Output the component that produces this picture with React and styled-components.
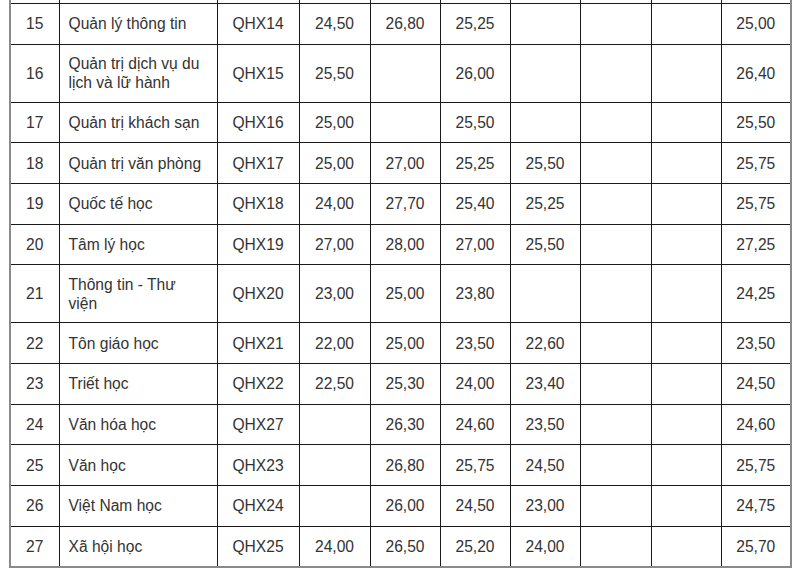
import React from 'react';
import styled, { createGlobalStyle } from 'styled-components';

const GlobalStyle = createGlobalStyle`
  html, body {
    margin: 0;
    padding: 0;
    background: #ffffff;
  }
  body {
    font-family: "Liberation Sans", Arial, Helvetica, sans-serif;
    color: #333333;
  }
`;

const Page = styled.div`
  width: 800px;
  height: 574px;
  overflow: hidden;
  background: #ffffff;
`;

const ScoreTable = styled.table`
  border-collapse: collapse;
  table-layout: fixed;
  width: 782px;
  margin: -38px 0 0 9px;
  border: 2px solid #8a8a8a;
  font-size: 15.6px;
  line-height: 19px;
  color: #333333;
`;

const Row = styled.tr`
  height: ${(p) => (p.$tall ? '58px' : '40.67px')};
`;

const Cell = styled.td`
  border: 1px solid #1a1a1a;
  padding: 0 ${(p) => (p.$wrap ? '12px' : '6px')} 0 ${(p) => (p.$wrap ? '9px' : '6px')};
  vertical-align: middle;
  text-align: ${(p) => p.$align || 'center'};
  white-space: ${(p) => (p.$wrap ? 'normal' : 'nowrap')};
`;

const widths = [49, 158, 82, 71, 70, 70, 70, 71, 70, 70];

const rows = [
  ['15', 'Quản lý thông tin', 'QHX14', '24,50', '26,80', '25,25', '', '', '', '25,00'],
  ['16', 'Quản trị dịch vụ du lịch và lữ hành', 'QHX15', '25,50', '', '26,00', '', '', '', '26,40'],
  ['17', 'Quản trị khách sạn', 'QHX16', '25,00', '', '25,50', '', '', '', '25,50'],
  ['18', 'Quản trị văn phòng', 'QHX17', '25,00', '27,00', '25,25', '25,50', '', '', '25,75'],
  ['19', 'Quốc tế học', 'QHX18', '24,00', '27,70', '25,40', '25,25', '', '', '25,75'],
  ['20', 'Tâm lý học', 'QHX19', '27,00', '28,00', '27,00', '25,50', '', '', '27,25'],
  ['21', 'Thông tin - Thư viện', 'QHX20', '23,00', '25,00', '23,80', '', '', '', '24,25'],
  ['22', 'Tôn giáo học', 'QHX21', '22,00', '25,00', '23,50', '22,60', '', '', '23,50'],
  ['23', 'Triết học', 'QHX22', '22,50', '25,30', '24,00', '23,40', '', '', '24,50'],
  ['24', 'Văn hóa học', 'QHX27', '', '26,30', '24,60', '23,50', '', '', '24,60'],
  ['25', 'Văn học', 'QHX23', '', '26,80', '25,75', '24,50', '', '', '25,75'],
  ['26', 'Việt Nam học', 'QHX24', '', '26,00', '24,50', '23,00', '', '', '24,75'],
  ['27', 'Xã hội học', 'QHX25', '24,00', '26,50', '25,20', '24,00', '', '', '25,70'],
];

const tallRows = ['16', '21'];

export default function App() {
  return (
    <Page>
      <GlobalStyle />
      <ScoreTable>
        <colgroup>
          {widths.map((w, i) => (
            <col key={i} style={{ width: w }} />
          ))}
        </colgroup>
        <tbody>
          {/* tail of the previous row, cut off by the screenshot */}
          <Row>
            {widths.map((_, i) => (
              <Cell key={i} />
            ))}
          </Row>
          {rows.map((r) => (
            <Row key={r[0]} $tall={tallRows.includes(r[0])}>
              {r.map((v, i) => (
                <Cell key={i} $align={i === 1 ? 'left' : 'center'} $wrap={i === 1}>
                  {v}
                </Cell>
              ))}
            </Row>
          ))}
        </tbody>
      </ScoreTable>
    </Page>
  );
}
